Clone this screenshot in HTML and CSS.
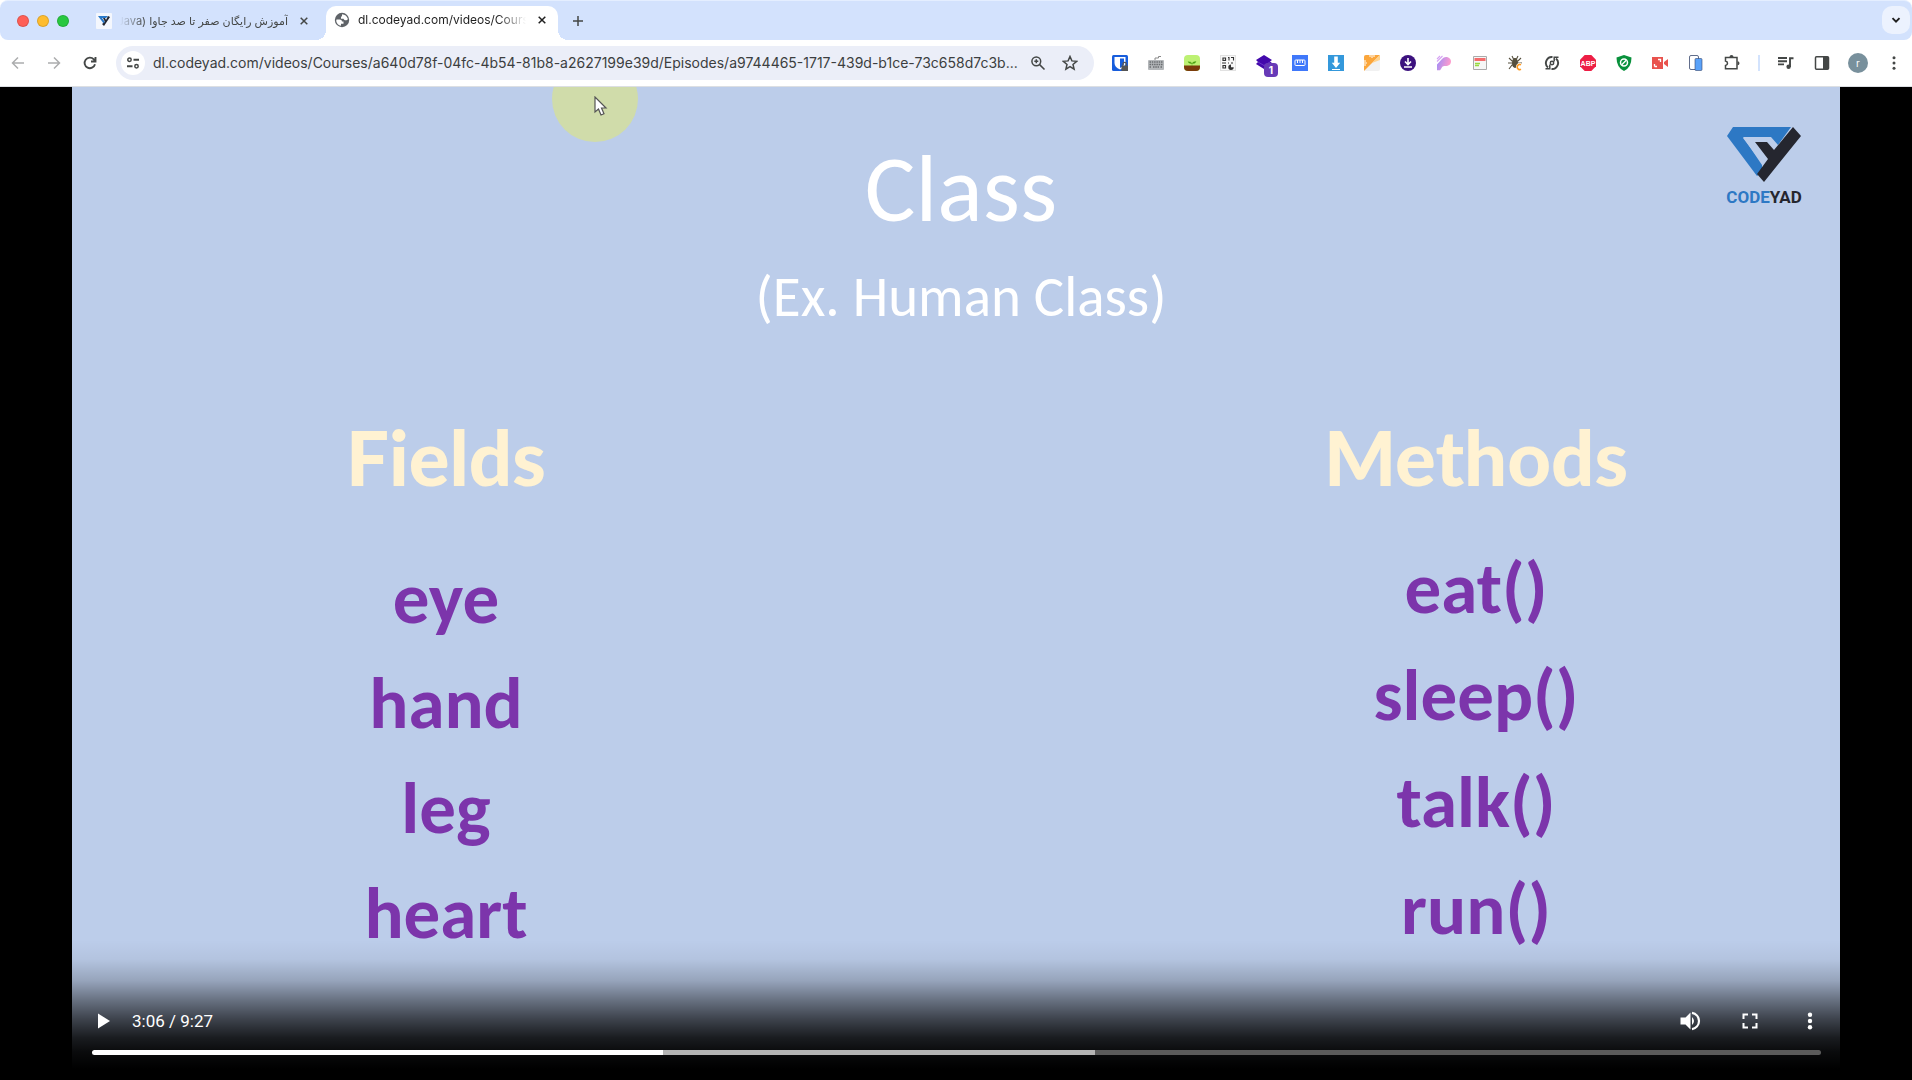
FILE: index.html
```html
<!DOCTYPE html>
<html lang="en">
<head>
<meta charset="utf-8">
<title>dl.codeyad.com/videos/Courses</title>
<link rel="stylesheet" href="styles.css">
</head>
<body>
<header class="browser">
  <div class="tabstrip">
    <div class="lights">
      <button class="light light-red" aria-label="Close window"></button>
      <button class="light light-yellow" aria-label="Minimise window"></button>
      <button class="light light-green" aria-label="Zoom window"></button>
    </div>
    <div class="tab">
      <svg class="icon favicon" viewBox="0 0 16 16"><rect width="16" height="16" rx="1" fill="#f4f7fd"/><path d="M2 3h10l-2 2H6l3 4-1 2z" fill="#2878c8"/><path d="M12 3l2 1-6 9-2-2 3-2-2-4h2l1 2z" fill="#222630"/></svg>
      <span class="tab-title tab-title-rtl" dir="rtl" lang="fa">آموزش رایگان صفر تا صد جاوا (Java)</span>
      <button class="close" aria-label="Close tab"><svg class="icon" viewBox="0 0 16 16"><path d="M4.700 4.700l6.600 6.600M11.300 4.700l-6.600 6.600" class="stroke"/></svg></button>
    </div>
    <div class="tab tab-active">
      <svg class="icon favicon" viewBox="0 0 16 16"><circle cx="8" cy="8" r="7.200" fill="#5f6368"/><path d="M2.500 7.500h3.200q2.300.2 2.300 2H9.500v2.200H7v2Q3 13 2.200 9zM8 2.200q4.500.3 5.800 4.500-.2 2.200-2.800 1.500-1-.2-1.500-1.500H7V4.500h1z" fill="#fff"/></svg>
      <span class="tab-title">dl.codeyad.com/videos/Cours</span>
      <button class="close" aria-label="Close tab"><svg class="icon" viewBox="0 0 16 16"><path d="M4.700 4.700l6.600 6.600M11.300 4.700l-6.600 6.600" class="stroke"/></svg></button>
    </div>
    <button class="newtab" aria-label="New tab"><svg class="icon" viewBox="0 0 16 16"><path d="M8 3v10M3 8h10" class="stroke"/></svg></button>
    <button class="tabsearch" aria-label="Search tabs"><svg class="icon" viewBox="0 0 16 16"><path d="M4.500 6.200L8 9.700l3.500-3.500" class="stroke stroke-bold"/></svg></button>
  </div>
  <div class="toolbar">
    <button class="tool tool-muted" aria-label="Back"><svg class="icon" viewBox="0 0 16 16"><path d="M14 8H3M8 2.500L2.500 8 8 13.500" class="stroke"/></svg></button>
    <button class="tool tool-muted" aria-label="Forward"><svg class="icon" viewBox="0 0 16 16"><path d="M2 8h11M8 2.500L13.500 8 8 13.500" class="stroke"/></svg></button>
    <button class="tool" aria-label="Reload"><svg class="icon" viewBox="0 0 16 16"><path d="M13 9.300A5.300 5.300 0 1 1 11.800 4.300L13.300 6M13.500 2v4.500H9" class="stroke stroke-bold"/></svg></button>
    <form class="omnibox">
      <button type="button" class="siteinfo" aria-label="View site information"><svg class="icon" viewBox="0 0 16 16"><circle cx="4.500" cy="4.800" r="1.700" class="stroke"/><path d="M8.500 4.800H14M2 11.200h5.500" class="stroke stroke-bold"/><circle cx="11.500" cy="11.200" r="1.700" class="stroke"/></svg></button>
      <input class="url" type="text" aria-label="Address and search bar" value="dl.codeyad.com/videos/Courses/a640d78f-04fc-4b54-81b8-a2627199e39d/Episodes/a9744465-1717-439d-b1ce-73c658d7c3b...">
      <button type="button" class="omni-btn" aria-label="Zoom"><svg class="icon" viewBox="0 0 16 16"><circle cx="6.300" cy="6.300" r="4.400" class="stroke"/><path d="M9.600 9.600l4.900 4.900M6.300 4.300v4M4.300 6.300h4" class="stroke"/></svg></button>
      <button type="button" class="omni-btn" aria-label="Bookmark this tab"><svg class="icon" viewBox="0 0 16 16"><path d="M8 1.500l1.900 4.400 4.800.4L11 9.500l1.100 4.700L8 11.700l-4.100 2.500L5 9.500 1.300 6.300l4.800-.4z" class="stroke"/></svg></button>
    </form>
    <div class="extensions">
      <button class="tool" aria-label="Bitwarden"><svg class="icon" viewBox="0 0 16 16"><rect width="16" height="16" rx="1.500" fill="#175ddc"/><path d="M2.500 2h11v6q0 4-5.500 6.500Q2.500 12 2.500 8z" fill="#fff"/><path d="M8 3.500h4V8q0 3-4 5z" fill="#175ddc"/><path d="M9.500 10.500H16V16H9.500z" fill="#555"/><path d="M11 10.500V9a1.700 1.700 0 0 1 3.400 0v1.500" fill="none" stroke="#555" stroke-width="1.300"/></svg></button>
      <button class="tool" aria-label="Keyboard"><svg class="icon" viewBox="0 0 16 16"><path d="M7 5V3h3.500V1.500H13" fill="none" stroke="#888"/><rect y="5" width="16" height="10" rx="1" fill="#b4b7ba"/><path d="M1.500 7h13M1.500 9.500h13M1.500 12h2m1.500 0h6m1.500 0h2" stroke="#6a6d71" stroke-width="1.400" stroke-dasharray="1.500 .8"/></svg></button>
      <button class="tool" aria-label="Seedling"><svg class="icon" viewBox="0 0 16 16"><rect width="16" height="16" rx="4" fill="#bdf173"/><path d="M0 10.500h16V12q0 4-4 4H4q-4 0-4-4z" fill="#7b3c0b"/><path d="M8 11V8.500Q5 9 4 6.800 7 6.500 8 8.500q.8-2 4-2Q11.500 9 8 8.500" fill="#48a010" stroke="#48a010" stroke-width=".4"/></svg></button>
      <button class="tool" aria-label="QR code"><svg class="icon" viewBox="0 0 16 16"><rect x=".5" y=".5" width="15" height="15" fill="#f8f8f8" stroke="#e1e1e1"/><path d="M3 3h2.500v2.500H3zM3 10.500h2.500V13H3z" fill="none" stroke="#333" stroke-width="1.200"/><path d="M8 2.500h1v3M11 2.500h2.500v3M8 8h1M2 8h4M11 8h2" fill="none" stroke="#333" stroke-width="1.100"/><path d="M11 9.500a2.700 2.700 0 1 0 2.700 2.700H11z" fill="#333"/></svg></button>
      <button class="tool" aria-label="Layers, 1 notification"><svg class="icon" viewBox="0 0 16 16"><path d="M8 0l8 5-2 1.500L16 8l-8 6-8-5 2-2L0 5z" fill="#4309ac"/><path d="M2 7l6 3.500L14 7" fill="none" stroke="#6a35cb"/></svg><span class="badge">1</span></button>
      <button class="tool" aria-label="Ruler"><svg class="icon" viewBox="0 0 16 16"><path d="M0 0h16v16H0z" fill="#3f78fa"/><rect x="3" y="5" width="10" height="5.500" rx=".8" fill="none" stroke="#fff"/><path d="M5.500 5v3M8 5v3M10.500 5v3" stroke="#fff"/></svg></button>
      <button class="tool" aria-label="Download manager"><svg class="icon" viewBox="0 0 16 16"><path d="M0 0h16v16H0z" fill="#3498db"/><path d="M6.200 1.500h3.600v6.200h2.400L8 13 3.800 7.700h2.400zM4 14h8v1H4z" fill="#fff"/></svg></button>
      <button class="tool" aria-label="Page ruler"><svg class="icon" viewBox="0 0 16 16"><rect width="16" height="16" rx="2" fill="#f1f1f1"/><path d="M0 16V2q0-2 2-2h14z" fill="#fba63b"/><path d="M16 0v5L8 8z" fill="#ffd28b"/><path d="M6 0v2M8 0v3M10 0v2M0 6h2M0 8h3M0 10h2" stroke="#fff"/></svg></button>
      <button class="tool" aria-label="Video downloader"><svg class="icon" viewBox="0 0 16 16"><circle cx="8" cy="8" r="8" fill="#3c117e"/><path d="M8 3v6M5 6.500l3 3 3-3M4 12h8" fill="none" stroke="#fff" stroke-width="1.600"/></svg></button>
      <button class="tool" aria-label="Pixel tools"><svg class="icon" viewBox="0 0 16 16"><defs><linearGradient id="pink" x2="1" y2=".3"><stop stop-color="#9a8cfb"/><stop offset="1" stop-color="#ff9ccc"/></linearGradient></defs><path d="M1 9.500L6 4q2-2.500 5-2 4 1 4 4.500T11 11H8q-2 0-3 3l-1 1.200H1z" fill="url(#pink)"/><path d="M1 6.500l4-4M1 4l3-3M5 2.500L6.500 1" stroke="#d6a3f3" stroke-width="1.100"/></svg></button>
      <button class="tool" aria-label="Page notes"><svg class="icon" viewBox="0 0 16 16"><path d="M1.500 1.500h13v13h-13z" fill="#f6f6f6" stroke="#aaa"/><path d="M2.500 3h11v3h-11z" fill="#f46c6c"/><path d="M3 8.500h5M3 10.500h4" stroke="#98d941" stroke-width="1.300"/></svg></button>
      <button class="tool" aria-label="Bug cleaner"><svg class="icon" viewBox="0 0 16 16"><ellipse cx="7" cy="8" rx="3" ry="5" fill="#56503f"/><path d="M4 1l1.500 3M10 1L8.500 4M1 3l3 3h6l3-3M0 8h14M1 14l3-4h6M5 4h4" fill="none" stroke="#56503f" stroke-width="1.100"/><path d="M13 9.700a2.500 2.500 0 1 0 0 4.600" fill="none" stroke="#fff" stroke-width="3.200"/><path d="M13 9.700a2.600 2.600 0 1 0 0 4.600" fill="none" stroke="#ff9a20" stroke-width="1.600"/></svg></button>
      <button class="tool" aria-label="Auto refresh"><svg class="icon" viewBox="0 0 16 16"><circle cx="8" cy="8" r="1.700" class="stroke"/><path d="M8.500 2A6 6 0 0 0 4 12.500M7.500 14A6 6 0 0 0 12 3.500" class="stroke stroke-bold"/><path d="M1.500 13.800h4.300V9.500M14.500 2.200h-4.300v4.300" class="stroke"/></svg></button>
      <button class="tool" aria-label="Adblock Plus"><svg class="icon" viewBox="0 0 16 16"><path d="M4.700 0h6.600L16 4.700v6.600L11.300 16H4.700L0 11.300V4.700z" fill="#ed1e45"/><text x="8" y="10.500" class="abp">ABP</text></svg></button>
      <button class="tool" aria-label="Ad shield"><svg class="icon" viewBox="0 0 16 16"><path d="M8 0l7.500 2.500q0 10-7.500 13.500Q.5 12.500.5 2.500z" fill="#09913c"/><circle cx="8" cy="7.500" r="3.500" fill="none" stroke="#fff" stroke-width="1.500"/><path d="M5.800 9.800l4.400-4.600" stroke="#fff" stroke-width="1.400"/></svg></button>
      <button class="tool" aria-label="Screen recorder"><svg class="icon" viewBox="0 0 16 16"><path d="M0 2h11v12H0zM12 7l4-3v8l-4-3z" fill="#e9524d"/><path d="M2.500 11.500V9M2.500 11.500H5M8.500 7V4.500H6" fill="none" stroke="#fff" stroke-width="1.300"/></svg></button>
      <button class="tool" aria-label="Device preview"><svg class="icon" viewBox="0 0 16 16"><rect x="1.500" y=".5" width="9" height="14" rx="1.500" fill="#fff" stroke="#38476d" stroke-width=".8"/><rect x="7" y="3.500" width="7" height="12" rx="1" fill="#5aa2f9" stroke="#38476d" stroke-width=".6"/></svg></button>
      <button class="tool" aria-label="Extensions"><svg class="icon" viewBox="0 0 16 16"><path d="M1.500 2.500h11.500v11.300H1.500v-3.300q2-.4 2-2.300T1.500 6z" class="stroke"/><path d="M5.500 2a2 2 0 0 1 4 0zM13.500 6.200a2 2 0 0 1 0 4z" fill="currentColor"/></svg></button>
    </div>
    <span class="divider"></span>
    <button class="tool" aria-label="Media controls"><svg class="icon" viewBox="0 0 16 16"><path d="M0 3h9M0 6.200h9M0 9.400h6M12 12V3.200h3.500" class="stroke stroke-bold"/><circle cx="10.600" cy="11.800" r="2.200" fill="currentColor"/></svg></button>
    <button class="tool" aria-label="Side panel"><svg class="icon" viewBox="0 0 16 16"><rect x="1.500" y="1.800" width="13" height="12.400" rx="1" class="stroke"/><path d="M9 2h5.500v12H9z" fill="currentColor"/></svg></button>
    <button class="tool" aria-label="Profile"><span class="avatar">r</span></button>
    <button class="tool" aria-label="Menu"><svg class="icon" viewBox="0 0 16 16" fill="currentColor"><circle cx="8" cy="2.700" r="1.500"/><circle cx="8" cy="8" r="1.500"/><circle cx="8" cy="13.300" r="1.500"/></svg></button>
  </div>
</header>
<main class="stage">
  <section class="slide">
    <header class="slide-head">
      <div class="headings">
        <h1 class="title">Class</h1>
        <p class="subtitle">(Ex. Human Class)</p>
      </div>
      <div class="brand">
        <svg class="brand-mark" viewBox="0 0 74 56"><path d="M6 0h58L51 18l-7-8H16l19 28v7l-5 4L0 9z" fill="#2d78c4"/><path d="M16 11h14l7 3-6 4 9 16-5 2z" fill="#bccdea"/><path d="M66 0l8 9-37 46-7-8 11-15-13-17h12l7 8z" fill="#25262f"/></svg>
        <span class="brand-name"><span class="brand-blue">CODE</span>YAD</span>
      </div>
    </header>
    <div class="columns">
      <section class="column">
        <h2 class="column-title">Fields</h2>
        <ul class="words words-fields"><li>eye</li><li>hand</li><li>leg</li><li>heart</li></ul>
      </section>
      <section class="column">
        <h2 class="column-title">Methods</h2>
        <ul class="words words-methods"><li>eat()</li><li>sleep()</li><li>talk()</li><li>run()</li></ul>
      </section>
    </div>
    <div class="pointer">
      <svg class="arrow" viewBox="0 0 14 20"><path d="M1 1v15l3.500-3 2.500 6 3-1.300L7.500 12H12z" fill="#fff" stroke="#555" stroke-width="1.200"/></svg>
    </div>
    <div class="controls">
      <div class="control-row">
        <button class="control" aria-label="Play"><svg class="glyph" viewBox="0 0 24 24"><path d="M6 4.500L18 12 6 19.500z" fill="currentColor"/></svg></button>
        <span class="time">3:06 / 9:27</span>
        <button class="control control-wide" aria-label="Mute"><svg class="glyph" viewBox="0 0 24 24"><path d="M2.500 8.500h5l5-5v17l-5-5h-5zM14 8q4 4 0 8z" fill="currentColor"/><path d="M14 3.800a8.300 8.300 0 0 1 0 16.400" fill="none" stroke="currentColor" stroke-width="2.200"/></svg></button>
        <button class="control control-wide" aria-label="Full screen"><svg class="glyph" viewBox="0 0 24 24"><path d="M5.500 10V5.500H10M14 5.500h4.500V10M18.500 14v4.500H14M10 18.500H5.500V14" fill="none" stroke="currentColor" stroke-width="2"/></svg></button>
        <button class="control control-wide" aria-label="More options"><svg class="glyph" viewBox="0 0 24 24" fill="currentColor"><circle cx="12" cy="5.800" r="2.200"/><circle cx="12" cy="12" r="2.200"/><circle cx="12" cy="18.200" r="2.200"/></svg></button>
      </div>
      <input class="seek" type="range" min="0" max="567" value="186" aria-label="Video position" style="--played:33%;--loaded:58%">
    </div>
  </section>
</main>
</body>
</html>
```
FILE: styles.css
```css
* { box-sizing: border-box; }
body {
  margin: 0;
  min-height: 100vh;
  display: flex;
  flex-direction: column;
  background: #000;
  font-family: Inter, "Liberation Sans", sans-serif;
}
button {
  padding: 0;
  border: 0;
  background: none;
  color: inherit;
  font: inherit;
  display: grid;
  place-items: center;
}
.icon { width: 16px; height: 16px; display: block; }
.stroke { fill: none; stroke: currentColor; stroke-width: 1.5; }
.stroke-bold { stroke-width: 1.9; }

/* tab strip */
.browser { background: #fff; color: #444746; border-bottom: 1px solid #dcdfe3; }
.tabstrip {
  display: flex;
  height: 40px;
  padding: 0 2px 0 17px;
  background: #d3e2fd;
  border-top: 1px solid #e4eeff;
  border-radius: 8px;
}
.lights { display: flex; align-items: center; gap: 8px; width: 69px; }
.light { width: 12px; height: 12px; border-radius: 50%; border: 1px solid #0002; }
.light-red { background: #ff5f57; }
.light-yellow { background: #febc2e; }
.light-green { background: #28c840; }
.tab {
  display: flex;
  align-items: center;
  gap: 8px;
  width: 240px;
  padding: 0 14px 0 10px;
  font-size: 12px;
}
.tab-active {
  position: relative;
  width: 232px;
  height: 34px;
  margin-top: 5px;
  padding: 0 8px;
  padding-bottom: 6px;
  border-radius: 10px 10px 0 0;
  background: #fff;
  color: #1f1f1f;
}
.tab-active::before, .tab-active::after {
  content: "";
  position: absolute;
  bottom: 0;
  width: 10px;
  height: 10px;
}
.tab-active::before { right: 100%; background: radial-gradient(circle at 0 0, #d3e2fd 10px, #fff 10px); }
.tab-active::after { left: 100%; background: radial-gradient(circle at 100% 0, #d3e2fd 10px, #fff 10px); }
.favicon { flex: none; }
.tab-title {
  flex: 1;
  min-width: 0;
  overflow: hidden;
  white-space: nowrap;
  line-height: 20px;
  mask-image: linear-gradient(to left, transparent, #000 28px);
}
.tab-title-rtl { font: 11px/20px Inter, "DejaVu Sans", sans-serif; mask-image: linear-gradient(to right, transparent, #000 24px); }
.close { flex: none; width: 16px; height: 16px; }
.newtab { width: 40px; }
.tabsearch {
  width: 28px;
  height: 28px;
  margin: 5px 0 0 auto;
  border-radius: 10px;
  background: #ecf2fe;
  color: #1f1f1f;
}

/* toolbar */
.toolbar { display: flex; align-items: center; height: 46px; }
.tool { position: relative; flex: none; width: 36px; height: 34px; }
.tool-muted { color: #acadae; }
.omnibox {
  flex: 1;
  min-width: 0;
  display: flex;
  align-items: center;
  height: 34px;
  margin: 0 8px;
  padding: 0 8px 0 5px;
  border-radius: 17px;
  background: #ebeef8;
}
.siteinfo { flex: none; width: 24px; height: 24px; border-radius: 50%; background: #fff; }
.url {
  flex: 1;
  min-width: 0;
  height: 24px;
  margin: 0 0 0 8px;
  padding: 0;
  border: 0;
  background: none;
  color: #3c3e40;
  font: 14px/24px Inter, "Liberation Sans", sans-serif;
  text-overflow: ellipsis;
}
.omni-btn { flex: none; width: 32px; height: 32px; }
.extensions { display: flex; }
.badge {
  position: absolute;
  left: 18px;
  top: 17px;
  width: 14px;
  height: 14px;
  border-radius: 4px;
  background: #673ab7;
  color: #fff;
  font-size: 10px;
  line-height: 14px;
  font-weight: 700;
}
.abp { font: 700 7px "Liberation Sans", sans-serif; fill: #fff; text-anchor: middle; }
.divider { width: 2px; height: 16px; margin: 0 8px; background: #d3e3fd; }
.avatar {
  width: 20px;
  height: 20px;
  border-radius: 50%;
  background: #78909c;
  color: #fff;
  font-size: 10px;
  line-height: 20px;
}

/* video */
.stage { flex: 1; display: flex; padding: 0 72px; background: #000; }
.slide {
  position: relative;
  flex: 1;
  min-width: 0;
  overflow: hidden;
  background: #bccdea;
  font-family: Calibri, Carlito, Lato, sans-serif;
}
.slide-head { display: grid; grid-template-columns: 1fr auto 1fr; padding: 40px 39px 0; }
.headings { grid-column: 2; padding: 10px 0 0 10px; text-align: center; color: #fff; }
.title { margin: 0 0 24px; font-size: 95px; line-height: 104px; font-weight: 400; }
.subtitle { margin: 0; font-size: 57px; line-height: 64px; }
.brand { justify-self: end; width: 74px; display: flex; flex-direction: column; align-items: center; gap: 4px; }
.brand-mark { width: 74px; height: 56px; }
.brand-name { font: 700 17px/20px Roboto, sans-serif; color: #25262f; }
.brand-blue { color: #2d78c4; }
.columns { display: flex; justify-content: space-between; padding: 82px 164px 0 174px; }
.column { width: 400px; text-align: center; }
.column-title {
  margin: 0;
  color: #fff2d2;
  font: 900 76px/92px "Comic Sans MS", Lato, sans-serif;
}
.words { margin: 0; padding: 0; list-style: none; color: #7c35ab; font-size: 73px; font-weight: 700; }
.words-fields { padding-top: 43px; line-height: 105px; }
.words-methods { padding-top: 32px; line-height: 107px; }

.pointer {
  position: absolute;
  left: 480px;
  top: -31px;
  width: 86px;
  height: 86px;
  border-radius: 50%;
  background: #d0dcaa;
  display: grid;
  place-items: center;
}
.arrow { width: 14px; height: 20px; margin: 14px 0 0 12px; }

/* player controls */
.controls {
  position: absolute;
  left: 0;
  right: 0;
  bottom: 0;
  height: 140px;
  padding: 0 0 25px 20px;
  display: flex;
  flex-direction: column;
  justify-content: flex-end;
  gap: 8px;
  color: #fff;
  background: linear-gradient(#0000 0%, #0000000c 14%, #0003 29%, #0007 44%, #000a 56%, #000d 70%, #000000f2 80%, #000 92%);
}
.control-row { display: flex; align-items: center; height: 42px; }
.control { width: 24px; height: 42px; }
.control-wide { width: 60px; }
.glyph { width: 24px; height: 24px; }
.time { flex: 1; padding-left: 16px; font: 17px/24px Roboto, sans-serif; }
.seek {
  appearance: none;
  width: calc(100% - 19px);
  height: 5px;
  margin: 0;
  border-radius: 3px;
  background: linear-gradient(to right, #fff var(--played), #b4b4b4 var(--played) var(--loaded), #5b5b5b var(--loaded));
}
.seek::-webkit-slider-thumb { appearance: none; width: 5px; height: 5px; background: none; }
```
